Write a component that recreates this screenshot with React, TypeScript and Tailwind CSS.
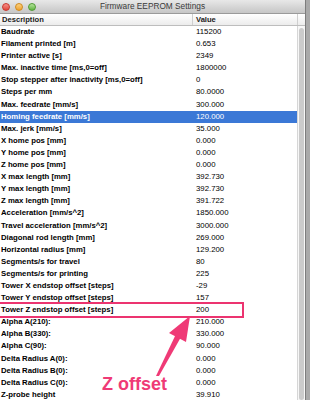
import React from 'react';

const rows: [string, string][] = [
  ['Baudrate', '115200'],
  ['Filament printed [m]', '0.653'],
  ['Printer active [s]', '2349'],
  ['Max. inactive time [ms,0=off]', '1800000'],
  ['Stop stepper after inactivity [ms,0=off]', '0'],
  ['Steps per mm', '80.0000'],
  ['Max. feedrate [mm/s]', '300.000'],
  ['Homing feedrate [mm/s]', '120.000'],
  ['Max. jerk [mm/s]', '35.000'],
  ['X home pos [mm]', '0.000'],
  ['Y home pos [mm]', '0.000'],
  ['Z home pos [mm]', '0.000'],
  ['X max length [mm]', '392.730'],
  ['Y max length [mm]', '392.730'],
  ['Z max length [mm]', '391.722'],
  ['Acceleration [mm/s^2]', '1850.000'],
  ['Travel acceleration [mm/s^2]', '3000.000'],
  ['Diagonal rod length [mm]', '269.000'],
  ['Horizontal radius [mm]', '129.200'],
  ['Segments/s for travel', '80'],
  ['Segments/s for printing', '225'],
  ['Tower X endstop offset [steps]', '-29'],
  ['Tower Y endstop offset [steps]', '157'],
  ['Tower Z endstop offset [steps]', '200'],
  ['Alpha A(210):', '210.000'],
  ['Alpha B(330):', '330.000'],
  ['Alpha C(90):', '90.000'],
  ['Delta Radius A(0):', '0.000'],
  ['Delta Radius B(0):', '0.000'],
  ['Delta Radius C(0):', '0.000'],
  ['Z-probe height', '39.910'],
];

export default function App() {
  return (
    <div className="relative w-[310px] h-[400px] overflow-hidden bg-[#a9a9a9] font-['Liberation_Sans',Arial,sans-serif]">
      <div className="w-[306px] h-full bg-white border-r border-[#7d7d7d] flex flex-col">
        {/* title bar */}
        <div className="relative h-[14px] shrink-0 bg-gradient-to-b from-[#e8e8e8] to-[#c6c6c6] border-b border-[#9a9a9a] flex items-center justify-center">
          <div className="absolute left-[2px] top-[3px] flex gap-[5px]">
            <span className="w-[8px] h-[8px] rounded-full bg-gradient-to-b from-[#f7918a] to-[#e0443b] border border-[#c8372f]" />
            <span className="w-[8px] h-[8px] rounded-full bg-gradient-to-b from-[#fbd27c] to-[#eea22b] border border-[#d08a1f]" />
            <span className="w-[8px] h-[8px] rounded-full bg-gradient-to-b from-[#b4e39a] to-[#5fb43e] border border-[#4f9a33]" />
          </div>
          <span className="text-[8.3px] leading-none text-[#3a3a3a]">Firmware EEPROM Settings</span>
        </div>

        {/* header */}
        <div className="h-[12px] shrink-0 flex bg-gradient-to-b from-white to-[#ececec] border-b border-[#bdbdbd] text-[7.6px] leading-[11px] font-bold text-[#222]">
          <div className="w-[193px] pl-[2px] border-r border-[#cfcfcf]">Description</div>
          <div className="w-[104px] pl-[3px]">Value</div>
          <div className="flex-1 border-l border-[#cfcfcf]" />
        </div>

        {/* body */}
        <div className="flex flex-1 min-h-0">
          <div className="w-[297px]">
            {rows.map(([d, v], i) => {
              const sel = i === 7;
              return (
                <div
                  key={i}
                  className={`h-[12.1px] flex leading-[12.1px] ${sel ? 'bg-[#3b78d6] text-white' : 'text-black'}`}
                >
                  <div className="w-[193px] pl-[1px] text-[7.75px] font-bold whitespace-nowrap">{d}</div>
                  <div className="pl-[3px] text-[7.8px]">{v}</div>
                </div>
              );
            })}
          </div>
          <div className="flex-1 border-l border-[#d6d6d6] bg-[#f7f7f7] pt-[2px] px-[1px]">
            <div className="h-full rounded-[3px] bg-[#cbcbcb]" />
          </div>
        </div>
      </div>

      {/* annotation */}
      <div className="absolute left-[-2px] top-[302px] w-[246px] h-[16px] border-2 border-[#ec3470]" />
      <svg className="absolute left-0 top-0" width="310" height="400" viewBox="0 0 310 400">
        <path d="M156 376 L159 376 L181 337 L176 334 Z" fill="#ef3a76" />
        <path d="M190 316 L169 333 L186 342 Z" fill="#ef3a76" />
      </svg>
      <span
        className="absolute left-[102px] top-[374px] text-[18px] leading-[20px] font-bold text-[#ef3a76]"
        style={{ textShadow: '0 0 2px #fff, 0 0 2px #fff' }}
      >
        Z offset
      </span>
    </div>
  );
}
